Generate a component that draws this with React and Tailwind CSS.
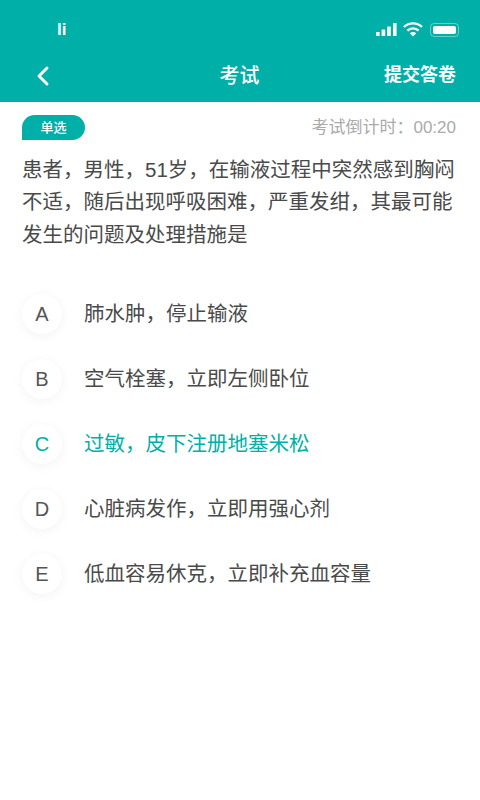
import { ChevronLeft } from 'lucide-react';

const font = "font-['Liberation_Sans','Noto_Sans_CJK_SC',sans-serif]";

const options = [
  { key: 'A', text: '肺水肿，停止输液' },
  { key: 'B', text: '空气栓塞，立即左侧卧位' },
  { key: 'C', text: '过敏，皮下注册地塞米松', active: true },
  { key: 'D', text: '心脏病发作，立即用强心剂' },
  { key: 'E', text: '低血容易休克，立即补充血容量' },
];

function StatusIcons() {
  return (
    <div className="flex items-center gap-[7px]">
      <svg className="-mr-[1px]" width="21" height="14" viewBox="0 0 21 14" fill="white">
        <rect x="0" y="9" width="3.6" height="4" rx="0.5" />
        <rect x="5.6" y="6.5" width="3.6" height="6.5" rx="0.5" />
        <rect x="11.2" y="3.5" width="3.6" height="9.5" rx="0.5" />
        <rect x="17" y="0" width="3.6" height="13" rx="0.5" />
      </svg>
      <svg width="20" height="15" viewBox="0 0 20 15" fill="none" stroke="white" strokeWidth="2.4">
        <path d="M1 5C6 0.2 14 0.2 19 5" />
        <path d="M4.4 8.6C7.6 5.6 12.4 5.6 15.6 8.6" />
        <path d="M10 14.5 L6.8 11.3 C8.6 9.7 11.4 9.7 13.2 11.3 Z" fill="white" stroke="none" />
      </svg>
      <div className="flex h-[14px] w-[29px] items-center rounded-[4px] border border-white/40 p-[2px]">
        <div className="h-full w-full rounded-[2px] bg-white" />
      </div>
    </div>
  );
}

export default function App() {
  return (
    <div className={`flex h-[800px] w-[480px] flex-col overflow-hidden bg-white ${font}`}>
      {/* Header */}
      <div className="h-[102px] bg-[#00b0a8] text-white">
        <div className="flex h-[50px] items-end justify-between pr-[21px] pl-[57px] pb-[13px]">
          <span className="text-[17px] leading-[14px] font-bold">li</span>
          <StatusIcons />
        </div>
        <div className="grid h-[50px] grid-cols-3 items-center pr-[24px] pl-[27px] pt-[1px]">
          <ChevronLeft size={32} strokeWidth={2.2} />
          <span className="-ml-[4px] text-center text-[20px] font-medium">考试</span>
          <span className="text-right text-[18px] font-bold">提交答卷</span>
        </div>
      </div>

      {/* Question */}
      <div className="px-[22px]">
        <div className="mt-[13px] flex items-center justify-between">
          <div className="flex h-[25px] w-[63px] items-center justify-center rounded-[12.5px] rounded-bl-none bg-[#00b0a8] text-[13px] font-medium text-white">
            单选
          </div>
          <span className="pr-[2px] text-[17px] text-[#aaaaaa]">考试倒计时：00:20</span>
        </div>
        <p className="mt-[13px] text-[20.5px] leading-[32.5px] text-[#4a4a4a]">
          患者，男性，51岁，在输液过程中突然感到胸闷不适，随后出现呼吸困难，严重发绀，其最可能发生的问题及处理措施是
        </p>
      </div>

      {/* Options */}
      <div className="mt-[43px] flex flex-col gap-[25px] pl-[22px]">
        {options.map((o) => (
          <div key={o.key} className="flex items-center gap-[22px]">
            <div
              className={`flex h-[40px] w-[40px] items-center justify-center rounded-full bg-white text-[20px] shadow-[0_2px_12px_rgba(0,0,0,0.05)] ${
                o.active ? 'text-[#00b0a8]' : 'text-[#555555]'
              }`}
            >
              {o.key}
            </div>
            <span className={`text-[20.5px] ${o.active ? 'text-[#00b0a8]' : 'text-[#4a4a4a]'}`}>{o.text}</span>
          </div>
        ))}
      </div>
    </div>
  );
}
